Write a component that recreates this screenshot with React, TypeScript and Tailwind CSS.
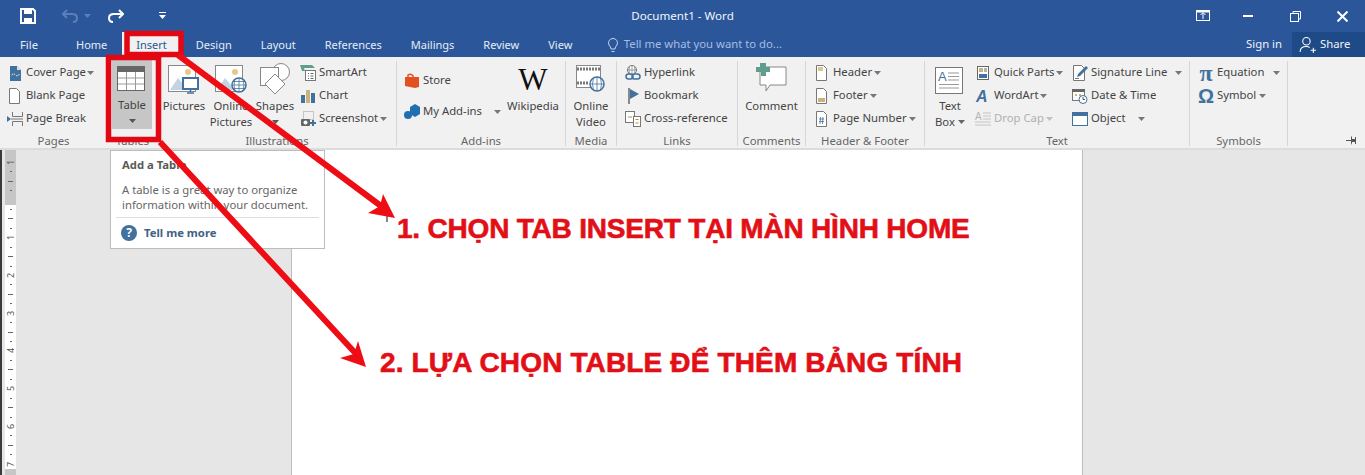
import type { ReactNode } from "react";

const font = "font-['Noto_Sans','Open_Sans',sans-serif]";

function Caret({ className = "" }: { className?: string }) {
  return (
    <svg width="7" height="4" viewBox="0 0 7 4" className={className}>
      <path d="M0 0h7L3.5 4z" fill="currentColor" />
    </svg>
  );
}

function Ico({ children, s = 16 }: { children: ReactNode; s?: number }) {
  return (
    <svg width={s} height={s} viewBox={`0 0 ${s} ${s}`} fill="none" className="shrink-0">
      {children}
    </svg>
  );
}

const Doc = ({ fill = "#fff" }: { fill?: string }) => (
  <path d="M2.500 .5h7l3 3v12h-10z" fill={fill} stroke="#777" />
);

const icons = {
  cover: (
    <Ico>
      <path d="M3 1h7l4 4v11H3z" fill="#41719c" />
      <path d="M10 1v4h4z" fill="#d7e3ef" />
      <path d="M4.500 10q2-2 4 0t4-1" stroke="#fff" strokeDasharray="1.5 1" />
    </Ico>
  ),
  blank: (
    <Ico>
      <Doc />
    </Ico>
  ),
  pageBreak: (
    <Ico>
      <path d="M5.500 1v4.500h10V1M5.500 15v-4.500h10V15" stroke="#777" />
      <path d="M4 8h12" stroke="#777" />
      <path d="M0 5l4 3-4 3z" fill="#41719c" />
    </Ico>
  ),
  smartArt: (
    <Ico>
      <path d="M0 0h12l3 3H4l1 3H2z" fill="#5f9e8f" />
      <rect x="5.500" y="5.500" width="10" height="10" fill="#fff" stroke="#777" />
      <path d="M8 8.500h1M10.500 8.500h3M8 11h1M10.500 11h3M8 13.500h1M10.500 13.500h3" stroke="#666" />
    </Ico>
  ),
  chart: (
    <Ico>
      <rect x="1" y="7" width="4" height="8" fill="#41719c" />
      <rect x="6" y="2" width="4" height="13" fill="#c9b27c" />
      <rect x="11" y="5" width="4" height="10" fill="#41719c" />
    </Ico>
  ),
  screenshot: (
    <Ico>
      <rect x="3.500" y="0.500" width="10" height="8" stroke="#999" strokeDasharray="1 1" />
      <rect x="1" y="8" width="9" height="7" rx="1" fill="#666" />
      <circle cx="5.500" cy="11.500" r="2" fill="#fff" />
      <path d="M13 9v6M10 12h6" stroke="#41719c" strokeWidth="2" />
    </Ico>
  ),
  store: (
    <Ico>
      <path d="M1 4h14v10l-4 1-10-2z" fill="#e2501f" />
      <path d="M4 5V2q3-2 5 1v2" stroke="#e2501f" strokeWidth="1.500" />
    </Ico>
  ),
  addins: (
    <Ico>
      <path d="M6 3l5-3 5 3v7l-5 3-5-3z" fill="#1f6fb2" />
      <circle cx="4" cy="11" r="4" fill="#1f6fb2" />
    </Ico>
  ),
  hyperlink: (
    <Ico>
      <circle cx="7" cy="5" r="4.500" stroke="#777" fill="#fff" />
      <path d="M2.500 5h9M7 .5v9M4.500 1.500q-1 3.500 0 7M9.500 1.500q1 3.500 0 7" stroke="#777" strokeWidth=".7" />
      <rect x="1" y="9" width="7" height="5" rx="2.500" stroke="#41719c" strokeWidth="1.500" fill="none" />
      <rect x="7" y="9" width="8" height="5" rx="2.500" stroke="#41719c" strokeWidth="1.500" fill="none" />
    </Ico>
  ),
  bookmark: (
    <Ico>
      <path d="M4 0v16" stroke="#666" strokeWidth="1.500" />
      <path d="M5 1l9 5-9 5z" fill="#41719c" />
    </Ico>
  ),
  crossRef: (
    <Ico>
      <rect x=".5" y=".5" width="9" height="11" fill="#fff" stroke="#777" />
      <rect x="8.500" y="5.500" width="7" height="10" fill="#fff" stroke="#777" />
      <path d="M3 6h4M10.500 8.500h3M10.500 12h3" stroke="#c08a3e" />
    </Ico>
  ),
  header: (
    <Ico>
      <Doc />
      <rect x="4" y="2" width="5" height="4" fill="#d9c98f" />
    </Ico>
  ),
  footer: (
    <Ico>
      <Doc />
      <rect x="4" y="10" width="7" height="4" fill="#c9b27c" />
    </Ico>
  ),
  pageNumber: (
    <Ico>
      <Doc />
      <path d="M5 8h5M5 10.500h5M6.500 6l-.5 7M9 6l-.5 7" stroke="#41719c" strokeWidth=".8" />
    </Ico>
  ),
  quickParts: (
    <Ico>
      <rect x="2.500" y="1.500" width="11" height="13" fill="#fff" stroke="#666" />
      <rect x="4" y="3" width="4" height="4" fill="#c9b27c" />
      <path d="M9 4h3M9 6h3" stroke="#666" />
      <rect x="4" y="9" width="8" height="4" fill="#41719c" />
    </Ico>
  ),
  wordArt: (
    <Ico>
      <text x="1" y="14" fontSize="16" fontWeight="700" fontStyle="italic" fill="#41719c" fontFamily="Liberation Sans">
        A
      </text>
    </Ico>
  ),
  dropCap: (
    <Ico>
      <text x="0" y="9" fontSize="10" fill="#b5b5b5" fontFamily="Liberation Sans">
        A
      </text>
      <path d="M8 2h8M8 5h8M8 8h8M0 11h16M0 14h16" stroke="#c4c4c4" />
    </Ico>
  ),
  signature: (
    <Ico>
      <path d="M1.500 .5h8l3 3v12h-11z" fill="#fff" stroke="#777" />
      <path d="M5 12l1-3 8-8 2 2-8 8z" fill="#41719c" />
      <path d="M3 13.500h4" stroke="#777" />
    </Ico>
  ),
  dateTime: (
    <Ico>
      <rect x=".5" y="1.500" width="12" height="11" fill="#fff" stroke="#777" />
      <rect x="0" y="1" width="13" height="3" fill="#666" />
      <rect x="3" y="6" width="2" height="2" fill="#c9b27c" />
      <rect x="7" y="6" width="2" height="2" fill="#c9b27c" />
      <circle cx="11" cy="11.500" r="4" fill="#fff" stroke="#41719c" />
      <path d="M11 9v2.500h2" stroke="#555" />
    </Ico>
  ),
  object: (
    <Ico>
      <rect x=".5" y="1.500" width="15" height="13" fill="#fff" stroke="#41719c" />
      <rect x="0" y="1" width="16" height="4" fill="#41719c" />
    </Ico>
  ),
  equation: <span className="font-['Liberation_Serif',serif] font-bold text-[24px] leading-4 text-[#41719c] w-4 text-center">π</span>,
  symbol: <span className="font-['Liberation_Sans',sans-serif] font-bold text-[20px] leading-4 text-[#41719c] w-4 text-center">Ω</span>,
};

function Small({
  icon,
  label,
  caret,
  caretGap = 2,
  muted,
  tall,
}: {
  icon: ReactNode;
  label: string;
  caret?: boolean;
  caretGap?: number;
  muted?: boolean;
  tall?: boolean;
}) {
  return (
    <div className={`flex items-center gap-[3px] ${tall ? "h-[31px]" : "h-[23px]"} ${muted ? "text-[#b0b0b0]" : ""}`}>
      <span className="w-4 flex justify-center shrink-0">{icon}</span>
      <span className="whitespace-nowrap">{label}</span>
      {caret && (
        <span style={{ marginLeft: caretGap }} className={muted ? "text-[#c0c0c0]" : "text-[#777]"}>
          <Caret className="block" />
        </span>
      )}
    </div>
  );
}

function Large({
  icon,
  lines,
  caret,
  width,
  active,
  inlineCaret,
}: {
  icon: ReactNode;
  lines: string[];
  caret?: boolean;
  width: string;
  active?: boolean;
  inlineCaret?: boolean;
}) {
  return (
    <div className={`${width} h-[69px] shrink-0 flex flex-col items-center ${active ? "bg-[#c6c6c6]" : ""}`}>
      <div className="h-[37px] pt-[2px] flex justify-center">{icon}</div>
      {lines.map((l, i) => (
        <div key={l} className="h-4 leading-4 whitespace-nowrap flex items-center gap-[3px]">
          {l}
          {inlineCaret && i === lines.length - 1 && <Caret className="text-[#666]" />}
        </div>
      ))}
      {caret && <Caret className="text-[#555] mt-[6px]" />}
    </div>
  );
}

function Group({
  label,
  width,
  children,
  divider = true,
}: {
  label: string;
  width: string;
  children: ReactNode;
  divider?: boolean;
}) {
  return (
    <div className={`${width} shrink-0 h-[85px] mt-[4px] flex flex-col ${divider ? "border-r border-[#d6d6d6]" : ""}`}>
      <div className="h-[70px] shrink-0 flex">{children}</div>
      <div className="h-[15px] leading-[19px] shrink-0 text-center text-[#666] whitespace-nowrap">{label}</div>
    </div>
  );
}

const Frame = ({ badge }: { badge: ReactNode }) => (
  <svg width="32" height="32" viewBox="0 0 32 32" fill="none">
    <rect x=".5" y="2.500" width="27" height="26" fill="#fff" stroke="#888" />
    <path d="M2 27l8-12 6 7 4-3 6 8z" fill="#c2d3e6" />
    <circle cx="20" cy="9" r="3" fill="#e6c98a" />
    {badge}
  </svg>
);

function RulerColumn() {
  const cells = Array.from({ length: 33 }, (_, i) => i - 4);
  return (
    <div className="w-[11px] ml-[3px] shrink-0 bg-[#c6c6c6] pt-[7.500px]">
      {cells.map((k) => (
        <div
          key={k}
          className={`h-[9.450px] flex items-center justify-center text-[9px] leading-[9px] text-[#555] ${k > 0 ? "bg-white" : ""}`}
        >
          {k % 4 === 0 && k !== 0 && <span className="-rotate-90 block">{Math.abs(k / 4)}</span>}
          {Math.abs(k % 4) === 2 && <span className="block w-[5px] h-px bg-[#666]" />}
          {k % 2 !== 0 && <span className="block w-[2px] h-px bg-[#666]" />}
        </div>
      ))}
    </div>
  );
}

const tabs = ["Home", "Insert", "Design", "Layout", "References", "Mailings", "Review", "View"];

export default function App() {
  return (
    <div className={`${font} relative w-[1365px] h-[475px] overflow-hidden bg-[#e6e6e6] text-[11.300px] text-[#444]`}>
      {/* title bar */}
      <div className="h-[32px] bg-[#2b579a] flex items-center text-white relative">
        <svg width="16" height="16" viewBox="0 0 16 16" fill="none" className="ml-[20px]">
          <path d="M1 1h12l2 2v12H1z" stroke="#fff" strokeWidth="2" />
          <rect x="4" y="1" width="8" height="5" fill="#fff" />
          <rect x="4" y="10" width="8" height="5" fill="#fff" />
        </svg>
        <svg width="16" height="14" viewBox="0 0 16 14" fill="none" className="ml-[26px]">
          <path d="M5 1L1 5l4 4M1 5h9q5 0 5 4t-4 4" stroke="#5b7fb8" strokeWidth="2" />
        </svg>
        <Caret className="ml-[6px] text-[#5b7fb8]" />
        <svg width="16" height="14" viewBox="0 0 16 14" fill="none" className="ml-[17px]">
          <path d="M11 1l4 4-4 4M15 5H6q-5 0-5 4t4 4" stroke="#fff" strokeWidth="2" />
        </svg>
        <svg width="7" height="8" viewBox="0 0 7 8" className="ml-[35px]">
          <path d="M0 0h7v1H0zM0 3h7L3.500 7z" fill="#fff" />
        </svg>
        <div className="absolute left-0 right-0 text-center text-[11.600px] text-[#f2f5fa]">Document1 - Word</div>
        <div className="ml-auto flex items-center">
          <svg width="14" height="12" viewBox="0 0 14 12" fill="none" className="mr-[33px]">
            <rect x=".5" y=".5" width="13" height="10" stroke="#fff" />
            <path d="M7 9V3M4.500 5L7 2.500 9.500 5" stroke="#fff" />
            <path d="M1 1h12v1.500H1z" fill="#fff" />
          </svg>
          <div className="w-[10px] h-[2px] bg-white mr-[37px]" />
          <svg width="11" height="11" viewBox="0 0 11 11" fill="none" className="mr-[36px]">
            <rect x=".5" y="2.500" width="8" height="8" stroke="#fff" />
            <path d="M3 2.500V.5h7.500v7.500H8.500" stroke="#fff" />
          </svg>
          <svg width="11" height="11" viewBox="0 0 11 11" fill="none" className="mr-[17px]">
            <path d="M.5.5l10 10M10.500.5l-10 10" stroke="#fff" strokeWidth="2" />
          </svg>
        </div>
      </div>

      {/* tab row */}
      <div className="h-[25px] bg-[#2b579a] flex items-stretch text-[#e6ecf5]">
        <div className="w-[61.500px] pl-[20px] leading-[26px]">File</div>
        {tabs.map((t) =>
          t === "Insert" ? (
            <div key={t} className="px-[14.500px] text-[11px] leading-[25px] bg-[#f1f1f1] text-[#2b579a]">
              {t}
            </div>
          ) : (
            <div key={t} className="px-[14.500px] text-[11px] leading-[25px]">
              {t}
            </div>
          ),
        )}
        <div className="ml-[20px] flex items-center gap-[5px] text-[#a5bde3]">
          <svg width="12" height="16" viewBox="0 0 12 16" fill="none">
            <path d="M4 12q0-2-2-4a4.500 4.500 0 1 1 8 0q-2 2-2 4zM4.500 14.500h3" stroke="#c5d5ee" />
          </svg>
          <span>Tell me what you want to do...</span>
        </div>
        <div className="ml-auto flex items-center">
          <span className="mr-[10px] text-[#eef2f8]">Sign in</span>
          <div className="w-[73px] h-[25px] bg-[#1e4a87] flex items-center pl-[7px] gap-[4px] text-[#eef2f8]">
            <svg width="17" height="18" viewBox="0 0 16 17" fill="none">
              <circle cx="7" cy="5" r="3.500" stroke="#fff" />
              <path d="M1 15q0-5 6-5 2 0 3 1M11 13.500h5M13.500 11v5" stroke="#fff" />
            </svg>
            Share
          </div>
        </div>
      </div>

      {/* ribbon */}
      <div className="h-[93px] bg-[#f1f1f1] border-b-2 border-[#dcdcdc] flex relative">
        <Group label="Pages" width="w-[107px]" divider={false}>
          <div className="ml-[7px]">
            <Small icon={icons.cover} label="Cover Page" caret caretGap={-2} />
            <Small icon={icons.blank} label="Blank Page" />
            <Small icon={icons.pageBreak} label="Page Break" />
          </div>
        </Group>
        <Group label="Tables" width="w-[51px]" divider={false}>
          <div className="ml-[5px] -mt-px">
            <Large
              width="w-[40px]"
              active
              caret
              lines={["Table"]}
              icon={
                <svg width="30" height="28" viewBox="0 0 30 28" fill="none" className="mt-px">
                  <rect x=".5" y="3.500" width="27" height="24" fill="#fff" stroke="#666" />
                  <rect y="3" width="28" height="6" fill="#666" />
                  <path d="M1 15h26M1 21h26M9.500 9v18M18.500 9v18" stroke="#999" />
                </svg>
              }
            />
          </div>
        </Group>
        <Group label="Illustrations" width="w-[239px]">
          <Large
            width="w-[52px]"
            lines={["Pictures"]}
            icon={
              <Frame
                badge={
                  <g>
                    <rect x="15" y="15" width="15" height="11" fill="#fff" stroke="#41719c" strokeWidth="2" />
                    <path d="M22.500 26v3M19 30h7" stroke="#41719c" strokeWidth="1.500" />
                  </g>
                }
              />
            }
          />
          <Large
            width="w-[42px]"
            lines={["Online", "Pictures"]}
            icon={
              <Frame
                badge={
                  <g stroke="#41719c">
                    <circle cx="24" cy="22" r="7" fill="#fff" strokeWidth="1.500" />
                    <path d="M17 22h14M24 15v14M20 16q-2 6 0 12M28 16q2 6 0 12M18 18.500h12M18 25.500h12" strokeWidth=".8" />
                  </g>
                }
              />
            }
          />
          <Large
            width="w-[46px]"
            caret
            lines={["Shapes"]}
            icon={
              <svg width="32" height="32" viewBox="0 0 32 32" fill="none" stroke="#888">
                <circle cx="22" cy="9" r="8.500" fill="#fff" />
                <rect x="1.500" y="4.500" width="18" height="18" fill="#fff" />
                <path d="M16 11l10 10-10 10-10-10z" fill="#fff" />
              </svg>
            }
          />
          <div className="ml-[2px]">
            <Small icon={icons.smartArt} label="SmartArt" />
            <Small icon={icons.chart} label="Chart" />
            <Small icon={icons.screenshot} label="Screenshot" caret caretGap={-1} />
          </div>
        </Group>
        <Group label="Add-ins" width="w-[169px]">
          <div className="ml-[7px] w-[99px] pt-[4px]">
            <Small tall icon={icons.store} label="Store" />
            <Small tall icon={icons.addins} label="My Add-ins" caret caretGap={9} />
          </div>
          <Large
            width="w-[60px]"
            lines={["Wikipedia"]}
            icon={<span className="font-['Liberation_Serif',serif] text-[31px] leading-[32px] text-[#111] pt-[1px]">W</span>}
          />
        </Group>
        <Group label="Media" width="w-[51px]">
          <Large
            width="w-[50px]"
            lines={["Online", "Video"]}
            icon={
              <svg width="30" height="32" viewBox="0 0 30 32" fill="none">
                <rect x=".5" y="2.500" width="24" height="22" fill="#fff" stroke="#888" />
                <path d="M1 6h23M1 20h12" stroke="#777" strokeWidth="3" strokeDasharray="2 1" />
                <circle cx="21" cy="21" r="7" fill="#fff" stroke="#41719c" strokeWidth="1.500" />
                <path d="M14 21h14M21 14v14M17.500 15q-2 6 0 12M24.500 15q2 6 0 12" stroke="#41719c" strokeWidth=".8" />
              </svg>
            }
          />
        </Group>
        <Group label="Links" width="w-[121px]">
          <div className="ml-[8px]">
            <Small icon={icons.hyperlink} label="Hyperlink" />
            <Small icon={icons.bookmark} label="Bookmark" />
            <Small icon={icons.crossRef} label="Cross-reference" />
          </div>
        </Group>
        <Group label="Comments" width="w-[68px]">
          <Large
            width="w-[67px]"
            lines={["Comment"]}
            icon={
              <svg width="32" height="30" viewBox="0 0 32 30" fill="none">
                <path d="M4 4h26v18H14l-4 6v-6H4z" fill="#fff" stroke="#888" />
                <path d="M4 0h6v4h4v5h-4v4H5V9H0V4h4z" fill="#5f9e8f" />
              </svg>
            }
          />
        </Group>
        <Group label="Header & Footer" width="w-[119px]">
          <div className="ml-[8px]">
            <Small icon={icons.header} label="Header" caret caretGap={-1} />
            <Small icon={icons.footer} label="Footer" caret caretGap={-1} />
            <Small icon={icons.pageNumber} label="Page Number" caret caretGap={-1} />
          </div>
        </Group>
        <Group label="Text" width="w-[265px]">
          <Large
            width="w-[50px]"
            lines={["Text", "Box"]}
            inlineCaret
            icon={
              <svg width="30" height="32" viewBox="0 0 30 32" fill="none" className="mt-[4px]">
                <rect x=".5" y=".5" width="27" height="26" fill="#fff" stroke="#777" />
                <text x="3" y="14" fontSize="13" fill="#41719c" fontFamily="Liberation Sans">
                  A
                </text>
                <path d="M13 6h11M13 9.500h11M13 13h11M4 17.500h20M4 21h20" stroke="#999" />
              </svg>
            }
          />
          <div className="w-[97px] shrink-0">
            <Small icon={icons.quickParts} label="Quick Parts" caret caretGap={-1} />
            <Small icon={icons.wordArt} label="WordArt" caret caretGap={-1} />
            <Small icon={icons.dropCap} label="Drop Cap" caret caretGap={-1} muted />
          </div>
          <div>
            <Small icon={icons.signature} label="Signature Line" caret caretGap={5} />
            <Small icon={icons.dateTime} label="Date & Time" />
            <Small icon={icons.object} label="Object" caret caretGap={9} />
          </div>
        </Group>
        <Group label="Symbols" width="w-[98px]">
          <div className="ml-[8px]">
            <Small icon={icons.equation} label="Equation" caret caretGap={6} />
            <Small icon={icons.symbol} label="Symbol" caret caretGap={0} />
          </div>
        </Group>
        <div className="flex-1 flex justify-end items-end pr-[8px] pb-[3px]">
          <svg width="11" height="9" viewBox="0 0 11 9">
            <path d="M0 4h5V1l1-1v3h3V1h1v7H9V6H6v3L5 7V5H0z" fill="#555" />
          </svg>
        </div>
      </div>

      {/* document area */}
      <div className="h-[325px] flex">
        <div className="w-[2px] shrink-0 bg-[#3a3a3a]" />
        <RulerColumn />
        <div className="w-[275px] shrink-0" />
        <div className="w-[792px] shrink-0 bg-white border-x border-[#bdbdbd]" />
      </div>

      {/* tooltip of the Table button */}
      <div className="absolute left-[110px] top-[150px] w-[215px] h-[99px] bg-white border border-[#bcbcbc] text-[#666] whitespace-nowrap">
        <div className="px-[11px] pt-[6px] font-bold text-[#5a5a5a] leading-4">Add a Table</div>
        <div className="px-[11px] pt-[9px] leading-[15px]">
          <div>A table is a great way to organize</div>
          <div>information within your document.</div>
        </div>
        <div className="mx-[5px] mt-[5px] border-t border-[#dedede]" />
        <div className="flex items-center gap-[7px] pl-[10px] pt-[7px] font-bold text-[#3f6384]">
          <span className="w-4 h-4 rounded-full bg-[#41719c] text-white text-[12px] leading-4 text-center">?</span>
          Tell me more
        </div>
      </div>

      {/* red annotations */}
      <svg width="1365" height="475" viewBox="0 0 1365 475" fill="none" className="absolute inset-0 pointer-events-none">
        <path d="M387 212v10" stroke="#111" />
        <rect x="127" y="33.500" width="54" height="21" stroke="#e30613" strokeWidth="5.500" />
        <rect x="108.500" y="57.500" width="50" height="82" stroke="#e30613" strokeWidth="5.500" />
        <path d="M178 55l203 151M160 142l198 214" stroke="#ee0d14" strokeWidth="6" />
        <path d="M395 218l-12-24-3 12-12 7z" fill="#ee0d14" />
        <path d="M366 367l-8-26-4 13-14 4z" fill="#ee0d14" />
      </svg>
      <div className="absolute left-[397px] top-[212px] whitespace-nowrap font-['Liberation_Sans',sans-serif] font-bold text-[28px] leading-[34px] tracking-[-0.2px] text-[#e30f17] [-webkit-text-stroke:0.6px_#e30f17]">
        1. CHỌN TAB INSERT TẠI MÀN HÌNH HOME
      </div>
      <div className="absolute left-[380px] top-[346px] whitespace-nowrap font-['Liberation_Sans',sans-serif] font-bold text-[28px] leading-[34px] tracking-[0.15px] text-[#e30f17] [-webkit-text-stroke:0.6px_#e30f17]">
        2. LỰA CHỌN TABLE ĐỂ THÊM BẢNG TÍNH
      </div>
    </div>
  );
}
